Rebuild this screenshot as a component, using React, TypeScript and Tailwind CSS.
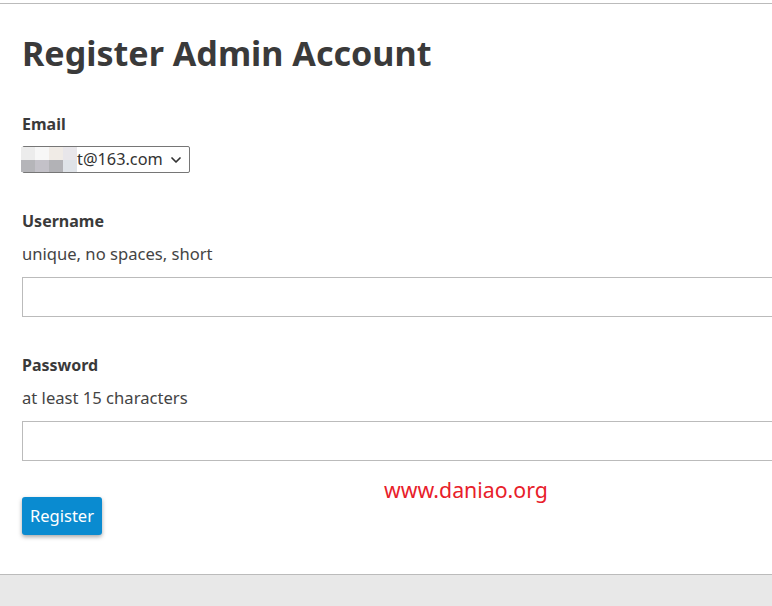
import React from 'react';
import { ChevronDown } from 'lucide-react';

const font = { fontFamily: '"Noto Sans", "Open Sans", sans-serif' };

const Field: React.FC<{ label: string; hint: string }> = ({ label, hint }) => (
  <div className="mt-[36px]">
    <label className="block text-[16px] font-bold leading-[24px] text-[#3a3a3a]">{label}</label>
    <p className="mt-[9px] text-[16.6px] leading-[24px] text-[#444]">{hint}</p>
    <input type="text" className="mt-[11px] block w-full h-[40px] border border-[#bbb] bg-white outline-none" />
  </div>
);

export default function App() {
  return (
    <div className="relative w-[772px] h-[606px] overflow-hidden bg-white" style={font}>
      <div className="pt-[3px] flex flex-col h-full">
        <div className="flex-1 mr-[-30px] bg-white border-t border-[#bbb] pl-[22px]">
          <h1 className="mt-[27px] text-[34.1px] font-bold leading-[44px] text-[#3a3a3a]">
            Register Admin Account
          </h1>

          <div className="mt-[37px]">
            <label className="block text-[16px] font-bold leading-[24px] text-[#3a3a3a]">Email</label>
            <div className="mt-[10px] w-[168px] h-[27px] border border-[#767676] rounded-[2px] flex items-center pr-[5px]">
              <div className="flex items-center h-full">
                <div className="grid grid-cols-4 grid-rows-2 w-[56px] h-[25px] ml-[-2px]">
                  <span className="bg-[#ececec]" />
                  <span className="bg-[#f7f7f7]" />
                  <span className="bg-[#f0ebe6]" />
                  <span className="bg-[#e8e6ea]" />
                  <span className="bg-[#b5b5b9]" />
                  <span className="bg-[#c3c1c8]" />
                  <span className="bg-[#b2b2b6]" />
                  <span className="bg-[#dfe3e8]" />
                </div>
                <span className="text-[16.3px] text-[#333] leading-none">t@163.com</span>
              </div>
              <ChevronDown className="ml-auto w-[16px] h-[16px] text-[#333]" strokeWidth={2.6} />
            </div>
          </div>

          <Field label="Username" hint="unique, no spaces, short" />
          <Field label="Password" hint="at least 15 characters" />

          <button className="mt-[36px] h-[38px] px-[8px] bg-[#0a8bd0] text-white text-[16.5px] rounded-[3px] shadow-[0_2px_4px_rgba(0,0,0,0.35)]">
            Register
          </button>
        </div>
        <div className="h-[32px] bg-[#e8e8e8] border-t border-[#bbb]" />
      </div>

      <span className="absolute left-[384px] top-[475px] text-[21.3px] text-[#e8202a] leading-[30px]">
        www.daniao.org
      </span>
    </div>
  );
}
